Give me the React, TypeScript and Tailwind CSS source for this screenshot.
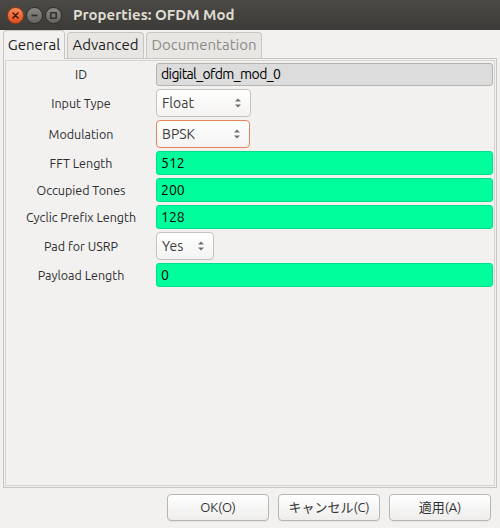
import React from "react";

const font = "font-['Ubuntu','Noto_Sans','Noto_Sans_CJK_JP',sans-serif]";

function Spinner() {
  return (
    <svg width="8" height="12" viewBox="0 0 8 12" className="shrink-0">
      <path d="M1 4.5 L4 1.5 L7 4.5 Z" fill="#6e6e6e" />
      <path d="M1 7.5 L4 10.5 L7 7.5 Z" fill="#6e6e6e" />
    </svg>
  );
}

function Combo({ value, width, focused }: { value: string; width: string; focused?: boolean }) {
  return (
    <div
      className={`${width} h-full flex items-center justify-between pl-[5px] pr-[8px] rounded-[4px] border bg-gradient-to-b from-white to-[#f4f3f2] text-[14px] text-[#3c3c3c] ${
        focused ? "border-[#e8825a]" : "border-[#c5c1bc]"
      }`}
    >
      <span>{value}</span>
      <Spinner />
    </div>
  );
}

function Entry({ value, green, tight }: { value: string; green?: boolean; tight?: boolean }) {
  return (
    <div
      className={`flex-1 h-full flex items-center pl-[4px] rounded-[3px] border text-[14px] text-black ${
        tight ? "tracking-[-0.6px]" : ""
      } ${green ? "bg-[#00ff9c] border-[#00e08a]" : "bg-[#dcdcdc] border-[#b5b3b0]"}`}
    >
      {value}
    </div>
  );
}

const rows: { label: string; h: string; field: React.ReactNode }[] = [
  { label: "ID", h: "h-[23px]", field: <Entry value="digital_ofdm_mod_0" tight /> },
  { label: "Input Type", h: "h-[28px]", field: <Combo value="Float" width="w-[95px]" /> },
  { label: "Modulation", h: "h-[28px]", field: <Combo value="BPSK" width="w-[94px]" focused /> },
  { label: "FFT Length", h: "h-[24px]", field: <Entry value="512" green /> },
  { label: "Occupied Tones", h: "h-[24px]", field: <Entry value="200" green /> },
  { label: "Cyclic Prefix Length", h: "h-[24px]", field: <Entry value="128" green /> },
  { label: "Pad for USRP", h: "h-[28px]", field: <Combo value="Yes" width="w-[58px]" /> },
  { label: "Payload Length", h: "h-[24px]", field: <Entry value="0" green /> },
];

function WinButton({ kind }: { kind: "close" | "min" | "max" }) {
  const close = kind === "close";
  return (
    <div
      className={`w-[17px] h-[17px] rounded-full flex items-center justify-center border ${
        close
          ? "bg-gradient-to-b from-[#f58a5c] to-[#e04d1b] border-[#9c3a14]"
          : "bg-gradient-to-b from-[#8a8984] to-[#65645f] border-[#2f2e2b]"
      }`}
    >
      <svg width="9" height="9" viewBox="0 0 9 9">
        {kind === "close" && (
          <path d="M2 2 L7 7 M7 2 L2 7" stroke="#4a1a08" strokeWidth="1.6" strokeLinecap="round" />
        )}
        {kind === "min" && <path d="M1.5 4.5 H7.5" stroke="#2e2d2a" strokeWidth="1.6" />}
        {kind === "max" && (
          <rect x="1.8" y="1.8" width="5.4" height="5.4" fill="none" stroke="#2e2d2a" strokeWidth="1.4" />
        )}
      </svg>
    </div>
  );
}

function DlgButton({ label }: { label: string }) {
  return (
    <button className="w-[102px] h-[27px] rounded-[4px] border border-[#b9b5b0] bg-gradient-to-b from-white to-[#eeedec] text-[13px] text-[#333] shadow-[0_1px_0_rgba(0,0,0,0.05)]">
      {label}
    </button>
  );
}

export default function App() {
  return (
    <div className={`w-[500px] h-[528px] bg-[#f2f1f0] flex flex-col overflow-hidden ${font}`}>
      {/* Title bar */}
      <div className="h-[30px] shrink-0 flex items-center bg-gradient-to-b from-[#4b4a46] to-[#3c3b37] pl-[7px]">
        <div className="flex items-center gap-[2px]">
          <WinButton kind="close" />
          <WinButton kind="min" />
          <WinButton kind="max" />
        </div>
        <span className="ml-[11px] text-[15px] font-bold text-[#dfdbd2]">Properties: OFDM Mod</span>
      </div>

      {/* Tabs */}
      <div className="h-[28px] shrink-0 flex items-end pl-[3px] gap-[2px] relative z-10">
        <div className="w-[62px] h-[29px] flex items-center justify-center border border-b-0 border-[#c9c5c0] rounded-t-[4px] bg-[#f2f1f0] text-[15px] text-[#202020] -mb-px">
          General
        </div>
        <div className="w-[77px] h-[26px] flex items-center justify-center border border-b-0 border-[#c9c5c0] rounded-t-[4px] bg-[#e8e6e3] text-[15px] text-[#202020]">
          Advanced
        </div>
        <div className="w-[116px] h-[26px] flex items-center justify-center border border-b-0 border-[#c9c5c0] rounded-t-[4px] bg-[#e8e6e3] text-[15px] text-[#8c8a87]">
          Documentation
        </div>
      </div>

      {/* Pane */}
      <div className="mx-[3px] h-[430px] shrink-0 border border-[#c9c5c0] p-[1px]">
        <div className="h-full border border-[#d8d5d1] pt-[2px] pr-[1px] flex flex-col gap-[3px]">
          {rows.map((r) => (
            <div key={r.label} className={`${r.h} flex items-center`}>
              <div className="w-[150px] shrink-0 text-center text-[12.5px] text-[#2e2e2e]">{r.label}</div>
              <div className="flex-1 h-full flex">{r.field}</div>
            </div>
          ))}
        </div>
      </div>

      {/* Buttons */}
      <div className="flex justify-end gap-[9px] pr-[9px] pt-[6px]">
        <DlgButton label="OK(O)" />
        <DlgButton label="キャンセル(C)" />
        <DlgButton label="適用(A)" />
      </div>
    </div>
  );
}
